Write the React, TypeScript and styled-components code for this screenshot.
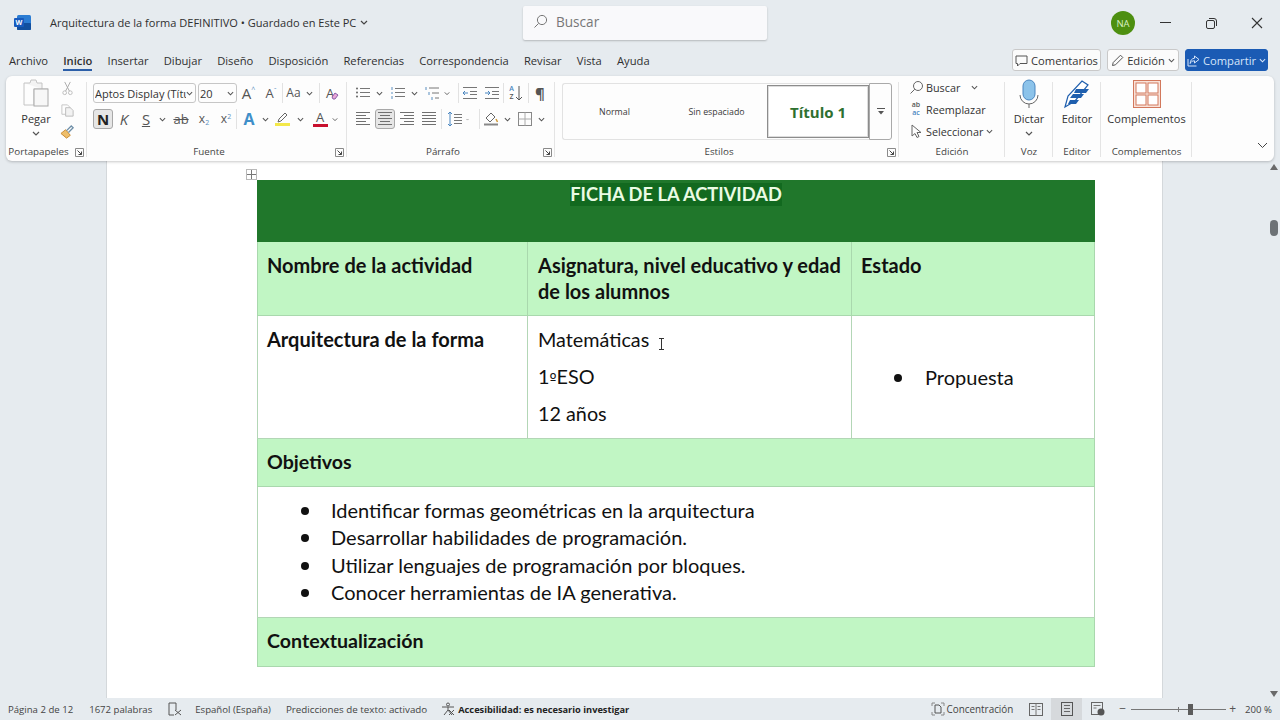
import React from "react";
import styled, { createGlobalStyle } from "styled-components";

const Global = createGlobalStyle`
  html, body { margin: 0; padding: 0; width: 1280px; height: 720px; overflow: hidden; background: #e6ebef; }
  #root { width: 1280px; height: 720px; }
  * { box-sizing: border-box; }
`;

const UI = `"Open Sans", "Noto Sans", sans-serif`;
const DOC = `Lato, "Open Sans", sans-serif`;

const Shell = styled.div`
  width: 1280px; height: 720px; display: flex; flex-direction: column; position: relative;
  background: #e6ebef; font-family: ${UI}; color: #333; overflow: hidden;
`;

/* title bar */
const TitleBar = styled.header`height: 46px; display: flex; align-items: center; flex: none;`;
const TitleLeft = styled.div`width: 523px; display: flex; align-items: center; padding: 0 0 1px 14px; flex: none;`;
const DocTitle = styled.span`margin-left: 19px; font-size: 11.05px; color: #2f2f2f; white-space: nowrap;`;
const TitleChev = styled.span`margin-left: 3px; display: flex;`;
const SearchBox = styled.div`
  width: 244px; height: 34px; background: #f9f9fb; display: flex; align-items: center; padding: 0 0 3px 10px; gap: 8px;
  box-shadow: 0 1px 2px rgba(0,0,0,.22); border-radius: 2px; font-size: 13.6px; color: #777; flex: none;
`;
const TitleRight = styled.div`flex: 1; display: flex; justify-content: flex-end; align-items: center;`;
const Avatar = styled.div`
  width: 24px; height: 24px; border-radius: 50%; background: #4d8f10; color: #d8eec0; font-size: 9.5px;
  display: flex; align-items: center; justify-content: center; margin-right: 7px;
`;
const WinBtn = styled.div`width: 46px; height: 46px; display: flex; align-items: center; justify-content: center;`;

/* tabs */
const TabRow = styled.nav`height: 30px; display: flex; align-items: center; padding: 0 12px 2px 9px; flex: none;`;
const Tab = styled.span<{ $active?: boolean }>`
  font-size: 11.2px; margin-right: 15.2px; color: #2f2f2f; white-space: nowrap; position: relative;
  font-weight: ${(p) => (p.$active ? 600 : 400)};
  ${(p) => p.$active && `&::after { content: ""; position: absolute; left: 0; right: 0; bottom: -3px; height: 2px; background: #2b5ea8; }`}
`;
const TabTools = styled.div`margin-left: auto; display: flex; gap: 6px;`;
const ToolBtn = styled.div<{ $w: number; $primary?: boolean }>`
  width: ${(p) => p.$w}px; height: 22px; border-radius: 3px; display: flex; align-items: center; justify-content: center; gap: 3px;
  font-size: 11.2px; white-space: nowrap;
  background: ${(p) => (p.$primary ? "#1b5bb4" : "#fbfbfb")};
  color: ${(p) => (p.$primary ? "#d7e6fa" : "#333")};
  border: 1px solid ${(p) => (p.$primary ? "#1b5bb4" : "#c9c9c9")};
`;

/* ribbon */
const Ribbon = styled.section`
  height: 85px; margin: 0 6px; background: #fdfdfd; border-radius: 6px; display: flex; flex: none;
  box-shadow: 0 1px 3px rgba(0,0,0,.22); position: relative; z-index: 2;
`;
const Group = styled.div<{ $w: number }>`
  width: ${(p) => p.$w}px; flex: none; display: flex; flex-direction: column; position: relative;
  &::after { content: ""; position: absolute; right: 0; top: 6px; bottom: 4px; width: 1px; background: #e4e4e4; }
`;
const GroupBody = styled.div`flex: 1; padding-top: 7px; min-height: 0; display: flex;`;
const GroupFoot = styled.div`height: 18px; display: flex; align-items: flex-start; flex: none; padding-top: 2px;`;
const GroupLabel = styled.span`flex: 1; text-align: center; font-size: 9.8px; color: #444; line-height: 14px; white-space: nowrap;`;
const Launcher = styled.span`width: 16px; height: 14px; display: flex; align-items: center; justify-content: center; flex: none;`;

const Rows = styled.div<{ $pad: number }>`padding-left: ${(p) => p.$pad}px; display: flex; flex-direction: column; gap: 6px;`;
const Row = styled.div`height: 20px; display: flex; align-items: center;`;
const Slot = styled.span<{ $w: number; $on?: boolean }>`
  width: ${(p) => p.$w}px; height: 20px; flex: none; display: flex; align-items: center; justify-content: center;
  ${(p) => p.$on && `background: #e6e6e6; border: 1px solid #a8a8a8; border-radius: 3px;`}
`;
const Gap = styled.span<{ $w: number }>`width: ${(p) => p.$w}px; flex: none;`;
const VLine = styled.span`width: 1px; height: 20px; background: #e2e2e2; flex: none;`;
const Combo = styled.div<{ $w: number }>`
  width: ${(p) => p.$w}px; height: 20px; border: 1px solid #c6c6c6; border-radius: 3px; display: flex; align-items: center;
  padding: 0 2px 0 1px; font-size: 11px; color: #333; flex: none; overflow: hidden; white-space: nowrap;
  & > span { flex: 1; overflow: hidden; }
`;
const Glyph = styled.span<{ $size?: number; $bold?: boolean; $color?: string; $italic?: boolean; $line?: string }>`
  font-size: ${(p) => p.$size ?? 13}px; line-height: 1; color: ${(p) => p.$color ?? "#555"};
  font-weight: ${(p) => (p.$bold ? 700 : 400)};
  font-style: ${(p) => (p.$italic ? "italic" : "normal")};
  text-decoration: ${(p) => p.$line ?? "none"};
  display: inline-flex; align-items: flex-start;
  & sub, & sup { font-size: 7px; line-height: 1; color: #5a8fc0; }
`;
const Stack = styled.span`display: flex; flex-direction: column; align-items: center;`;
const Bar = styled.span<{ $c: string }>`width: 15px; height: 3px; background: ${(p) => p.$c}; margin-top: 0; display: block;`;
const Tiny = styled.span<{ $c?: string }>`font-size: 7px; line-height: 8px; font-weight: 600; color: ${(p) => p.$c ?? "#555"};`;
const SortMark = styled.span`display: flex; align-items: center; gap: 1px;`;

const BigBtn = styled.div<{ $w: number; $pad?: number }>`
  width: ${(p) => p.$w}px; margin-left: ${(p) => p.$pad ?? 0}px; flex: none; display: flex; flex-direction: column; align-items: center;
  font-size: 11px; color: #333; margin-top: -4px;
  & > svg:first-child { height: 30px; flex: none; margin-bottom: 2px; }
  & > span { line-height: 15px; white-space: nowrap; }
  & > svg + span + svg { margin-top: 5px; }
`;
const SmallCol = styled.div`width: 16px; display: flex; flex-direction: column; align-items: center; gap: 7px; flex: none; margin-top: -2px;`;
const Gallery = styled.div`
  margin-left: 7px; width: 307px; height: 57px; border: 1px solid #e2e2e2; border-right: none; border-radius: 3px 0 0 3px; display: flex; align-items: center; flex: none;
`;
const StyleCell = styled.div<{ $w: number }>`
  width: ${(p) => p.$w}px; text-align: center; font-size: 8.8px; color: #3a3a3a; flex: none; white-space: nowrap;
`;
const StyleHero = styled.div`
  width: 102px; height: 53px; border: 1px solid #8c8c8c; display: flex; align-items: center; justify-content: center; flex: none;
  font-size: 15px; font-weight: 700; color: #2e7030; white-space: nowrap; background: #fff; box-shadow: inset 0 0 0 1px #ddd;
`;
const GalleryMore = styled.div`
  width: 23px; height: 57px; border: 1px solid #a9a9a9; border-radius: 0 3px 3px 0; display: flex; align-items: center; justify-content: center; flex: none;
`;
const EditCol = styled.div`padding-left: 8px; display: flex; flex-direction: column; gap: 4px; margin-top: -5px; flex: none;`;
const EditRow = styled.div`height: 18px; display: flex; align-items: center; font-size: 10.8px; color: #333; white-space: nowrap;`;
const EditIcon = styled.span`width: 18px; display: flex; justify-content: center; align-items: center; flex: none; margin-right: 1px;`;
const EditChev = styled.span<{ $ml: number }>`margin-left: ${(p) => p.$ml}px; display: flex;`;
const Collapse = styled.div`margin-left: auto; align-self: flex-end; padding: 0 6px 7px 0;`;

/* main */
const Main = styled.main`flex: 1; min-height: 0; display: flex; margin-top: -1px;`;
const Canvas = styled.div`flex: 1; padding-left: 106px; min-width: 0; overflow: hidden;`;
const Page = styled.article`
  width: 1057px; height: 100%; background: #fff; border-left: 1px solid #d4d8db; border-right: 1px solid #d4d8db; padding: 20px 0 0 150px;
`;
const Scroller = styled.aside`width: 11px; margin-right: 1px; display: flex; flex-direction: column; align-items: center; padding-top: 4px; flex: none;`;
const Thumb = styled.div`width: 8px; height: 16px; border-radius: 4px; background: #6d7276; margin-top: 50px;`;
const Arrow = styled.div<{ $down?: boolean }>`
  width: 0; height: 0; border-left: 4px solid transparent; border-right: 4px solid transparent;
  ${(p) => (p.$down ? `border-top: 6px solid #6a6a6a; margin-top: auto; margin-bottom: 1px;` : `border-bottom: 6px solid #6a6a6a;`)}
`;

const TableWrap = styled.div`position: relative; width: 837px;`;
const MoveHandle = styled.div`
  position: absolute; left: -11px; top: -11px; width: 11px; height: 11px; border: 1px solid #b9b9b9; background: #fff;
  display: flex; align-items: center; justify-content: center;
`;
const Sheet = styled.table`
  border-collapse: collapse; table-layout: fixed; width: 837px; font-family: ${DOC}; color: #111;
`;
const Tr = styled.tr<{ $h: number }>`height: ${(p) => p.$h}px;`;
const Banner = styled.th`
  background: #20772b; vertical-align: top; padding: 2px 0 0; text-align: center; border: 1px solid #20772b;
`;
const BannerText = styled.span`
  background: #12691f; color: #eafbe4; font-size: 18.3px; font-weight: 700; line-height: 23px; display: inline-block;
`;
const HeadCell = styled.td<{ $pl?: number }>`
  background: #c1f6c4; border: 1px solid #a9d8ad; padding: 10px 9px 0 ${(p) => p.$pl ?? 9}px; vertical-align: top;
  font-size: 20px; font-weight: 700; line-height: 26px;
`;
const BandCell = styled.td<{ $pb?: number }>`
  background: #c1f6c4; border: 1px solid #a9d8ad; padding: 0 9px ${(p) => p.$pb ?? 1}px; vertical-align: middle;
  font-size: 19.6px; font-weight: 700; line-height: 26px;
`;
const BodyCell = styled.td<{ $pl?: number }>`
  background: #fff; border: 1px solid #b3d6b6; padding: 10px 10px 0 ${(p) => p.$pl ?? 10}px;
  vertical-align: top; font-size: 20px; line-height: 26px;
`;
const MiddleCell = styled.td<{ $pb?: number }>`
  background: #fff; border: 1px solid #b3d6b6; padding: 0 10px ${(p) => p.$pb ?? 0}px;
  vertical-align: middle; font-size: 20px; line-height: 26px;
`;
const Strong = styled.strong`font-weight: 700;`;
const Para = styled.p`margin: 0 0 11px; font-size: 19.8px; line-height: 26px; white-space: nowrap;`;
const Ordinal = styled.span`font-family: "DejaVu Sans", sans-serif; font-size: 15px; line-height: 0;`;
const Ibeam = styled.svg`display: inline-block; margin-left: 9px; vertical-align: -3px;`;
const Bullets = styled.ul<{ $indent: number; $gap: number }>`
  margin: 0; padding: 0 0 0 ${(p) => p.$indent}px; list-style: none; display: flex; flex-direction: column; gap: ${(p) => p.$gap}px;
`;
const BulletItem = styled.li<{ $dot: number }>`
  position: relative; font-size: 20px; line-height: 26px; white-space: nowrap;
  &::before { content: ""; position: absolute; left: ${(p) => p.$dot}px; top: 10px; width: 8px; height: 8px; border-radius: 50%; background: #111; }
`;

/* status */
const Status = styled.footer`
  height: 22px; flex: none; background: #e6ebef; display: flex; align-items: center; font-size: 9.6px; color: #444; position: relative; z-index: 2; padding-left: 8px;
`;
const StatusText = styled.span<{ $ml?: number; $bold?: boolean; $fs?: number }>`
  margin-left: ${(p) => p.$ml ?? 0}px; white-space: nowrap; font-weight: ${(p) => (p.$bold ? 700 : 400)};
  font-size: ${(p) => p.$fs ?? 9.6}px;
  color: ${(p) => (p.$bold ? "#222" : "#444")};
`;
const StatusIcon = styled.svg<{ $ml: number }>`margin-left: ${(p) => p.$ml}px; flex: none;`;
const StatusRight = styled.div`margin-left: auto; display: flex; align-items: center; height: 22px; padding-right: 8px;`;
const ViewBtn = styled.span<{ $on?: boolean }>`
  width: 31px; height: 22px; display: flex; align-items: center; justify-content: center; background: ${(p) => (p.$on ? "#d6d9dc" : "transparent")};
`;
const Zoom = styled.div`
  width: 95px; height: 1px; background: #777; position: relative; margin: 0 3px 0 5px;
  &::before { content: ""; position: absolute; left: 57px; top: -5px; width: 5px; height: 11px; background: #5c5c5c; }
  &::after { content: ""; position: absolute; left: 47px; top: -2px; width: 1px; height: 5px; background: #777; }
`;

/* icons */
const Chev = ({ w = 8, c = "#555" }: { w?: number; c?: string }) => (
  <svg width={w} height={5} viewBox="0 0 8 5" fill="none"><path d="M1 1l3 3 3-3" stroke={c} strokeWidth="1.2" /></svg>
);
const Launch = () => (
  <svg width="9" height="9" viewBox="0 0 9 9" fill="none"><path d="M.5 8.5V.5h8v8z" stroke="#8a8a8a" /><path d="M2.5 2.5l4 4M6.5 3.5v3h-3" stroke="#444" /></svg>
);
const Lines = ({ x = 1, w = 14, ys = [3, 6, 9, 12], c = "#777" }: { x?: number; w?: number; ys?: number[]; c?: string }) => (
  <>{ys.map((y) => <path key={y} d={`M${x} ${y + 0.5}h${w}`} stroke={c} />)}</>
);
const Ico = ({ s = 16, children }: { s?: number; children: React.ReactNode }) => (
  <svg width={s} height={s} viewBox="0 0 16 16" fill="none">{children}</svg>
);
const alignPath = (kind: "l" | "c" | "r" | "j") => {
  const rows = [2, 5, 8, 11, 14];
  return rows.map((y, i) => {
    const long = i % 2 === 0 || kind === "j";
    const w = long ? 14 : 10;
    const x = kind === "l" ? 1 : kind === "r" ? 15 - w : 8 - w / 2;
    return <path key={y} d={`M${x} ${y - 0.5}h${w}`} stroke="#707070" />;
  });
};

const App = () => (
  <Shell>
    <Global />
    <TitleBar>
      <TitleLeft>
        <svg width="17" height="17" viewBox="0 0 17 17">
          <rect x="3" y="1" width="14" height="15" rx="1.5" fill="#2b7cd3" />
          <rect x="3" y="9" width="14" height="7" rx="1" fill="#124f9e" />
          <rect x="0" y="4" width="10" height="9" rx="1" fill="#185abd" />
          <text x="5" y="11" fontSize="7" fontWeight="700" fill="#fff" textAnchor="middle" fontFamily="Open Sans">W</text>
        </svg>
        <DocTitle>Arquitectura de la forma DEFINITIVO • Guardado en Este PC</DocTitle>
        <TitleChev><Chev w={10} c="#444" /></TitleChev>
      </TitleLeft>
      <SearchBox>
        <svg width="15" height="15" viewBox="0 0 15 15" fill="none"><circle cx="9" cy="6" r="4.6" stroke="#777" /><path d="M5.6 9.4L1.5 13.5" stroke="#777" /></svg>
        Buscar
      </SearchBox>
      <TitleRight>
        <Avatar>NA</Avatar>
        <WinBtn><svg width="11" height="2"><path d="M0 .5h11" stroke="#333" /></svg></WinBtn>
        <WinBtn><svg width="11" height="11" fill="none"><rect x=".5" y="2.5" width="8" height="8" rx="1.5" stroke="#333" /><path d="M3 .5h5a2.5 2.5 0 0 1 2.5 2.5v5" stroke="#333" /></svg></WinBtn>
        <WinBtn><svg width="12" height="12"><path d="M1 1l10 10M11 1L1 11" stroke="#333" strokeWidth="1.1" /></svg></WinBtn>
      </TitleRight>
    </TitleBar>

    <TabRow>
      {["Archivo", "Inicio", "Insertar", "Dibujar", "Diseño", "Disposición", "Referencias", "Correspondencia", "Revisar", "Vista", "Ayuda"].map((t) => (
        <Tab key={t} $active={t === "Inicio"}>{t}</Tab>
      ))}
      <TabTools>
        <ToolBtn $w={89}>
          <svg width="13" height="13" viewBox="0 0 13 13" fill="none"><path d="M1 2h11v7.5H5L2.500 12V9.500H1z" stroke="#555" /></svg>
          Comentarios
        </ToolBtn>
        <ToolBtn $w={72}>
          <svg width="13" height="13" viewBox="0 0 13 13" fill="none"><path d="M1.500 11.500l.7-3L9.500 1.200l2.300 2.300L4.500 10.800z" stroke="#555" /></svg>
          Edición <Chev w={7} />
        </ToolBtn>
        <ToolBtn $w={83} $primary>
          <svg width="13" height="13" viewBox="0 0 13 13" fill="none"><path d="M7.500 2l4.500 3.500L7.500 9V6.800C5 6.800 3.800 8 3.200 9.500 3.200 6.500 5 4.300 7.500 4.200zM1 5v7h8.500" stroke="#d7e6fa" /></svg>
          Compartir <Chev w={7} c="#d7e6fa" />
        </ToolBtn>
      </TabTools>
    </TabRow>

    <Ribbon>
      <Group $w={81}>
        <GroupBody>
          <BigBtn $w={46} $pad={7}>
            <svg width="30" height="30" viewBox="0 0 30 30" fill="none">
              <path d="M3 4h6l1-3h5l1 3h5v6" stroke="#c4c4c4" fill="#f3f3f3" />
              <path d="M3 4v22h10V10h14" stroke="#c4c4c4" />
              <rect x="13" y="10" width="14" height="17" stroke="#aaa" fill="#f7f7f7" />
            </svg>
            <span>Pegar</span>
            <Chev />
          </BigBtn>
          <SmallCol>
            <Ico s={15}><circle cx="5" cy="12.500" r="2" stroke="#bbb" /><circle cx="11" cy="12.500" r="2" stroke="#bbb" /><path d="M6 10.700L11 1M10 10.700L5 1" stroke="#aaa" /></Ico>
            <Ico s={15}><path d="M2 2h6l3 3v7H2z" stroke="#c4c4c4" /><path d="M6 5h5l3 3v6H6z" stroke="#bbb" fill="#f2f2f2" /></Ico>
            <Ico s={15}><path d="M1 9l5-4 5 6-4 3z" fill="#eebe6a" stroke="#c78a32" /><path d="M7 6l5-5 2 2-5 5" stroke="#6f8fa8" strokeWidth="1.4" /></Ico>
          </SmallCol>
        </GroupBody>
        <GroupFoot><GroupLabel>Portapapeles</GroupLabel><Launcher><Launch /></Launcher></GroupFoot>
      </Group>

      <Group $w={260}>
        <GroupBody>
          <Rows $pad={6}>
            <Row>
              <Combo $w={103}><span>Aptos Display (Títu</span><Chev w={7} /></Combo>
              <Gap $w={2} />
              <Combo $w={39}><span>20</span><Chev w={7} /></Combo>
              <Slot $w={23}><Glyph $size={15}>A<sup>^</sup></Glyph></Slot>
              <Slot $w={22}><Glyph $size={13}>A<sup>ˇ</sup></Glyph></Slot>
              <VLine />
              <Slot $w={21}><Glyph $size={12}>Aa</Glyph></Slot>
              <Slot $w={10}><Chev w={7} /></Slot>
              <Gap $w={5} />
              <VLine />
              <Slot $w={25}>
                <SortMark>
                  <Glyph $size={13}>A</Glyph>
                  <svg width="8" height="8" viewBox="0 0 8 8" style={{ marginLeft: -4, marginTop: 6 }}><path d="M1 5l3-4 3 2-3 4H2z" fill="#e9a6d8" stroke="#8a5ea8" /></svg>
                </SortMark>
              </Slot>
            </Row>
            <Row>
              <Slot $w={20} $on><Glyph $size={15} $bold $color="#222">N</Glyph></Slot>
              <Slot $w={22}><Glyph $size={15} $italic>K</Glyph></Slot>
              <Slot $w={22}><Glyph $size={15} $line="underline">S</Glyph></Slot>
              <Slot $w={10}><Chev w={7} /></Slot>
              <Gap $w={3} />
              <Slot $w={22}><Glyph $size={13} $line="line-through">ab</Glyph></Slot>
              <Slot $w={24}><Glyph $size={12}>x<sub style={{ marginTop: 6 }}>2</sub></Glyph></Slot>
              <Slot $w={20}><Glyph $size={12}>x<sup>2</sup></Glyph></Slot>
              <VLine />
              <Slot $w={24}><Glyph $size={16} $bold $color="#3f8fc9">A</Glyph></Slot>
              <Slot $w={8}><Chev w={7} /></Slot>
              <Slot $w={26}>
                <Stack>
                  <svg width="15" height="11" viewBox="0 0 15 11" fill="none"><path d="M3 10l1-3L10 1l2 2-6 6z" stroke="#666" /></svg>
                  <Bar $c="#f3e84a" />
                </Stack>
              </Slot>
              <Slot $w={10}><Chev w={7} /></Slot>
              <Gap $w={3} />
              <Slot $w={24}><Stack><Glyph $size={13}>A</Glyph><Bar $c="#c8102e" /></Stack></Slot>
              <Slot $w={6}><Chev w={7} /></Slot>
            </Row>
          </Rows>
        </GroupBody>
        <GroupFoot><GroupLabel>Fuente</GroupLabel><Launcher><Launch /></Launcher></GroupFoot>
      </Group>

      <Group $w={208}>
        <GroupBody>
          <Rows $pad={6}>
            <Row>
              <Slot $w={20}><Ico><Lines x={5} w={10} ys={[3, 7, 11]} /><circle cx="2" cy="3.500" r="1" fill="#666" /><circle cx="2" cy="7.500" r="1" fill="#666" /><circle cx="2" cy="11.500" r="1" fill="#666" /></Ico></Slot>
              <Slot $w={12}><Chev w={7} /></Slot>
              <Gap $w={2} />
              <Slot $w={22}><Ico><Lines x={5} w={10} ys={[3, 7, 11]} /><path d="M2 2v3M2 7v2M2 11v3" stroke="#5a8fc0" /></Ico></Slot>
              <Slot $w={10}><Chev w={7} /></Slot>
              <Gap $w={3} />
              <Slot $w={22}><Ico><path d="M4 3h10M7 8h7M10 13h4" stroke="#777" /><path d="M1 2v3M4 7v3M7 12v3" stroke="#5a8fc0" /></Ico></Slot>
              <Slot $w={6}><Chev w={7} /></Slot>
              <Gap $w={8} />
              <VLine />
              <Slot $w={22}><Ico><Lines x={1} w={14} ys={[2, 13]} /><Lines x={8} w={7} ys={[6, 9]} /><path d="M6 8H1m2-2L1 8l2 2" stroke="#4a86c0" /></Ico></Slot>
              <Slot $w={22}><Ico><Lines x={1} w={14} ys={[2, 13]} /><Lines x={8} w={7} ys={[6, 9]} /><path d="M1 8h5M4 6l2 2-2 2" stroke="#4a86c0" /></Ico></Slot>
              <VLine />
              <Slot $w={24}>
                <SortMark>
                  <Stack><Tiny $c="#4a86c0">A</Tiny><Tiny>Z</Tiny></Stack>
                  <svg width="8" height="16" viewBox="0 0 8 16" fill="none"><path d="M4 1v14M1 12l3 3 3-3" stroke="#555" /></svg>
                </SortMark>
              </Slot>
              <VLine />
              <Slot $w={22}><Glyph $size={15} $bold>¶</Glyph></Slot>
            </Row>
            <Row>
              <Slot $w={20}><Ico>{alignPath("l")}</Ico></Slot>
              <Gap $w={2} />
              <Slot $w={20} $on><Ico>{alignPath("c")}</Ico></Slot>
              <Gap $w={2} />
              <Slot $w={20}><Ico>{alignPath("r")}</Ico></Slot>
              <Gap $w={2} />
              <Slot $w={20}><Ico>{alignPath("j")}</Ico></Slot>
              <Gap $w={2} />
              <VLine />
              <Gap $w={2} />
              <Slot $w={22}><Ico><Lines x={7} w={8} ys={[3, 6, 9, 12]} /><path d="M3 1v14M1 3l2-2 2 2M1 13l2 2 2-2" stroke="#4a86c0" /></Ico></Slot>
              <Slot $w={3}><Chev w={7} /></Slot>
              <Gap $w={10} />
              <VLine />
              <Slot $w={22}><Ico><path d="M3 7l5-5 4 4-5 5z" stroke="#666" /><path d="M13 8l1.500 3" stroke="#d09a3a" strokeWidth="1.500" /><path d="M1 13.500h14" stroke="#888" strokeWidth="2" /></Ico></Slot>
              <Slot $w={10}><Chev w={7} /></Slot>
              <Gap $w={3} />
              <Slot $w={20}><Ico><rect x="1.500" y="1.500" width="13" height="13" stroke="#888" /><path d="M8 1.500v13M1.500 8h13" stroke="#aaa" /></Ico></Slot>
              <Gap $w={1} />
              <Slot $w={10}><Chev w={7} /></Slot>
            </Row>
          </Rows>
        </GroupBody>
        <GroupFoot><GroupLabel>Párrafo</GroupLabel><Launcher><Launch /></Launcher></GroupFoot>
      </Group>

      <Group $w={344}>
        <GroupBody>
          <Gallery>
            <StyleCell $w={103}>Normal</StyleCell>
            <StyleCell $w={101}>Sin espaciado</StyleCell>
            <StyleHero>Título 1</StyleHero>
          </Gallery>
          <GalleryMore>
            <svg width="8" height="7" viewBox="0 0 8 7"><path d="M0 .5h8" stroke="#555" /><path d="M1 3h6L4 6.500z" fill="#555" /></svg>
          </GalleryMore>
        </GroupBody>
        <GroupFoot><GroupLabel>Estilos</GroupLabel><Launcher><Launch /></Launcher></GroupFoot>
      </Group>

      <Group $w={106}>
        <GroupBody>
          <EditCol>
            <EditRow>
              <EditIcon><svg width="15" height="15" viewBox="0 0 15 15" fill="none"><circle cx="9" cy="6" r="4.500" stroke="#666" /><path d="M5.800 9.200L1.500 13.500" stroke="#666" /></svg></EditIcon>
              Buscar<EditChev $ml={11}><Chev w={7} /></EditChev>
            </EditRow>
            <EditRow>
              <EditIcon>
                <Stack><Tiny>ab</Tiny><Tiny $c="#4a86c0">ac</Tiny></Stack>
              </EditIcon>
              Reemplazar
            </EditRow>
            <EditRow>
              <EditIcon><svg width="15" height="15" viewBox="0 0 15 15" fill="none"><path d="M3 1v11l3-2.500 2 4 2-1-2-4h4z" stroke="#666" /></svg></EditIcon>
              Seleccionar<EditChev $ml={3}><Chev w={7} /></EditChev>
            </EditRow>
          </EditCol>
        </GroupBody>
        <GroupFoot><GroupLabel>Edición</GroupLabel></GroupFoot>
      </Group>

      <Group $w={48}>
        <GroupBody>
          <BigBtn $w={48}>
            <svg width="24" height="30" viewBox="0 0 24 30" fill="none">
              <rect x="6" y="1" width="12" height="20" rx="6" fill="#8cc3ea" stroke="#4a86c0" />
              <path d="M3 16a9 9 0 0 0 18 0M12 25v4" stroke="#666" />
            </svg>
            <span>Dictar</span>
            <Chev />
          </BigBtn>
        </GroupBody>
        <GroupFoot><GroupLabel>Voz</GroupLabel></GroupFoot>
      </Group>

      <Group $w={48}>
        <GroupBody>
          <BigBtn $w={48}>
            <svg width="30" height="30" viewBox="0 0 30 30" fill="none">
              <path d="M3 28l3-11L20 2l6 4-13 16z" stroke="#1f5fae" strokeWidth="1.200" fill="#fff" />
              <path d="M14 10h13l-3 4H12zM11 15h11l-3 4H8zM8 21h9l-3 4H6z" fill="#1f5fae" />
            </svg>
            <span>Editor</span>
          </BigBtn>
        </GroupBody>
        <GroupFoot><GroupLabel>Editor</GroupLabel></GroupFoot>
      </Group>

      <Group $w={91}>
        <GroupBody>
          <BigBtn $w={91}>
            <svg width="30" height="30" viewBox="0 0 30 30" fill="none">
              <rect x="1.500" y="1.500" width="27" height="27" stroke="#d2785c" fill="#f9e3da" />
              <rect x="4" y="4" width="10" height="10" fill="#fff" stroke="#d2785c" />
              <rect x="16" y="4" width="10" height="10" fill="#fff" stroke="#d2785c" />
              <rect x="4" y="16" width="10" height="10" fill="#fff" stroke="#d2785c" />
              <rect x="16" y="16" width="10" height="10" fill="#fff" stroke="#d2785c" />
            </svg>
            <span>Complementos</span>
          </BigBtn>
        </GroupBody>
        <GroupFoot><GroupLabel>Complementos</GroupLabel></GroupFoot>
      </Group>

      <Collapse><svg width="11" height="7" viewBox="0 0 11 7" fill="none"><path d="M1 1l4.500 4.500L10 1" stroke="#444" /></svg></Collapse>
    </Ribbon>

    <Main>
      <Canvas>
        <Page>
          <TableWrap>
            <MoveHandle>
              <svg width="9" height="9" viewBox="0 0 9 9"><path d="M4.500 0v9M0 4.500h9" stroke="#777" /></svg>
            </MoveHandle>
            <Sheet>
              <colgroup><col width={270} /><col width={324} /><col width={243} /></colgroup>
              <tbody>
                <Tr $h={61}><Banner colSpan={3}><BannerText>FICHA DE LA ACTIVIDAD</BannerText></Banner></Tr>
                <Tr $h={74}>
                  <HeadCell>Nombre de la actividad</HeadCell>
                  <HeadCell $pl={10}>Asignatura, nivel educativo y edad de los alumnos</HeadCell>
                  <HeadCell>Estado</HeadCell>
                </Tr>
                <Tr $h={123}>
                  <BodyCell $pl={9}><Strong>Arquitectura de la forma</Strong></BodyCell>
                  <BodyCell>
                    <Para>Matemáticas<Ibeam width="7" height="12" viewBox="0 0 7 12" fill="none"><path d="M1 .5h5M1 11.500h5M3.500 .5v11" stroke="#333" /></Ibeam></Para>
                    <Para>1<Ordinal>º</Ordinal>ESO</Para>
                    <Para>12 años</Para>
                  </BodyCell>
                  <MiddleCell>
                    <Bullets $indent={63} $gap={0}><BulletItem $dot={-31}>Propuesta</BulletItem></Bullets>
                  </MiddleCell>
                </Tr>
                <Tr $h={48}><BandCell colSpan={3}>Objetivos</BandCell></Tr>
                <Tr $h={131}>
                  <MiddleCell colSpan={3} $pb={2}>
                    <Bullets $indent={63} $gap={1.300}>
                      <BulletItem $dot={-30}>Identificar formas geométricas en la arquitectura</BulletItem>
                      <BulletItem $dot={-30}>Desarrollar habilidades de programación.</BulletItem>
                      <BulletItem $dot={-30}>Utilizar lenguajes de programación por bloques.</BulletItem>
                      <BulletItem $dot={-30}>Conocer herramientas de IA generativa.</BulletItem>
                    </Bullets>
                  </MiddleCell>
                </Tr>
                <Tr $h={49}><BandCell colSpan={3} $pb={3}>Contextualización</BandCell></Tr>
              </tbody>
            </Sheet>
          </TableWrap>
        </Page>
      </Canvas>
      <Scroller><Arrow /><Thumb /><Arrow $down /></Scroller>
    </Main>

    <Status>
      <StatusText>Página 2 de 12</StatusText>
      <StatusText $ml={16}>1672 palabras</StatusText>
      <StatusIcon $ml={16} width="14" height="14" viewBox="0 0 14 14" fill="none"><path d="M1 1h7v7M1 1v12h5" stroke="#555" /><path d="M7 8l6 5M13 8l-6 5" stroke="#555" /></StatusIcon>
      <StatusText $ml={13}>Español (España)</StatusText>
      <StatusText $ml={15} $fs={9.8}>Predicciones de texto: activado</StatusText>
      <StatusIcon $ml={14} width="14" height="14" viewBox="0 0 14 14" fill="none"><circle cx="7" cy="2.500" r="1.500" stroke="#555" /><path d="M1 5h12M7 5v3M3 13l4-5 4 5M8 8l5 5M13 8l-5 5" stroke="#555" /></StatusIcon>
      <StatusText $ml={3} $bold $fs={9.25}>Accesibilidad: es necesario investigar</StatusText>
      <StatusRight>
        <svg width="14" height="14" viewBox="0 0 14 14" fill="none"><path d="M4 3h4l2 2v6H4z" stroke="#555" /><path d="M1 4V1h3M13 4V1h-3M1 10v3h3M13 10v3h-3" stroke="#888" /></svg>
        <StatusText $ml={2} $fs={9.9}>Concentración</StatusText>
        <Gap $w={7} />
        <ViewBtn><svg width="14" height="13" viewBox="0 0 14 13" fill="none"><rect x=".5" y=".5" width="13" height="12" stroke="#666" /><path d="M7 .5v12M2.500 3.500h3M2.500 6.500h3M8.500 3.500h3M8.500 6.500h3" stroke="#777" /></svg></ViewBtn>
        <ViewBtn $on><svg width="12" height="14" viewBox="0 0 12 14" fill="none"><rect x=".5" y=".5" width="11" height="13" stroke="#555" /><path d="M3 3.500h6M3 6.500h6M3 9.500h6" stroke="#666" /></svg></ViewBtn>
        <ViewBtn><svg width="14" height="14" viewBox="0 0 14 14" fill="none"><rect x=".5" y=".5" width="11" height="12" stroke="#666" /><path d="M2.500 3.500h7M2.500 6h3" stroke="#777" /><circle cx="10" cy="10" r="3.500" fill="#555" /></svg></ViewBtn>
        <Gap $w={6} />
        <Glyph $size={12}>−</Glyph>
        <Zoom />
        <Glyph $size={12}>+</Glyph>
        <StatusText $ml={9}>200 %</StatusText>
      </StatusRight>
    </Status>
  </Shell>
);

export default App;
